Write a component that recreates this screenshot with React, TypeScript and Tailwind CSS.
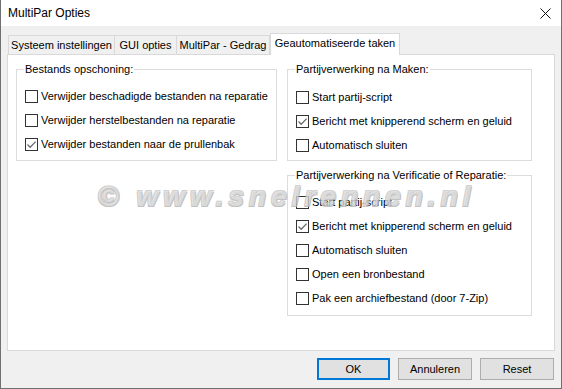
import React from 'react'

/* ─── Checkbox rij ─────────────────────────────────────── */
function Check({ label, checked = false }: { label: string; checked?: boolean }) {
  return (
    <div className="flex h-[24px] items-center">
      <span className="flex h-[13px] w-[13px] flex-shrink-0 items-center justify-center border border-[#333333] bg-white">
        {checked && (
          <svg width="11" height="11" viewBox="0 0 11 11" fill="none">
            <path d="M1.5 5.5 L4.2 8.2 L9.6 2.6" stroke="#6b6b6b" strokeWidth="1.3" />
          </svg>
        )}
      </span>
      <span className="ml-[3px] whitespace-nowrap">{label}</span>
    </div>
  )
}

/* ─── Groepsvak ────────────────────────────────────────── */
function Group({
  title,
  className,
  children,
}: {
  title: string
  className: string
  children: React.ReactNode
}) {
  return (
    <fieldset className={`min-w-0 border border-[#dcdcdc] pl-[8px] ${className}`}>
      <legend className="-ml-[1px] whitespace-nowrap px-[1px] leading-[16px]">{title}</legend>
      {children}
    </fieldset>
  )
}

const tabs = [
  { label: 'Systeem instellingen', w: 'w-[107px]' },
  { label: 'GUI opties', w: 'w-[62px]' },
  { label: 'MultiPar - Gedrag', w: 'w-[93px]' },
]

export default function App() {
  return (
    <div className="flex h-[389px] w-[562px] flex-col overflow-hidden border-x border-b border-[#707070] bg-[#f0f0f0] font-['Liberation_Sans',Arial,sans-serif] text-[11px] text-black">
      {/* Titelbalk */}
      <div className="flex h-[26px] flex-shrink-0 items-center justify-between bg-white pl-[7px] pr-[10px] text-[12px]">
        <span>MultiPar Opties</span>
        <svg width="11" height="11" viewBox="0 0 11 11" fill="none">
          <path d="M0.5 0.5 L10.5 10.5 M10.5 0.5 L0.5 10.5" stroke="#111" strokeWidth="1" />
        </svg>
      </div>

      <div className="flex flex-1 flex-col px-[6px]">
        {/* Tabs */}
        <div className="mt-[7px] flex h-[21px] items-end pl-[1px]">
          {tabs.map((t, i) => (
            <div
              key={t.label}
              className={`flex h-[19px] ${t.w} items-center justify-center whitespace-nowrap border border-b-0 border-[#d9d9d9] bg-[#f0f0f0] pt-[1px] ${i > 0 ? 'border-l-0' : ''}`}
            >
              {t.label}
            </div>
          ))}
          <div className="relative z-10 -mb-px flex h-[22px] w-[130px] items-center justify-center whitespace-nowrap border border-b-0 border-[#d9d9d9] bg-white pb-[2px]">
            Geautomatiseerde taken
          </div>
        </div>

        {/* Paneel */}
        <div className="relative flex h-[297px] gap-[10px] border border-[#d9d9d9] bg-white pl-[8px] pt-[6px]">
          <Group title="Bestands opschoning:" className="h-[100px] w-[261px] flex-shrink-0 pt-[7px]">
            <Check label="Verwijder beschadigde bestanden na reparatie" />
            <Check label="Verwijder herstelbestanden na reparatie" />
            <Check label="Verwijder bestanden naar de prullenbak" checked />
          </Group>

          <div className="flex w-[245px] flex-shrink-0 flex-col gap-[6px]">
            <Group title="Partijverwerking na Maken:" className="h-[100px] pt-[8px]">
              <Check label="Start partij-script" />
              <Check label="Bericht met knipperend scherm en geluid" checked />
              <Check label="Automatisch sluiten" />
            </Group>
            <Group title="Partijverwerking na Verificatie of Reparatie:" className="h-[149px] pt-[7px]">
              <Check label="Start partij-script" />
              <Check label="Bericht met knipperend scherm en geluid" checked />
              <Check label="Automatisch sluiten" />
              <Check label="Open een bronbestand" />
              <Check label="Pak een archiefbestand (door 7-Zip)" />
            </Group>
          </div>

          {/* Watermerk */}
          <span className="pointer-events-none absolute left-[90px] top-[128px] whitespace-nowrap font-['Liberation_Sans',sans-serif] text-[28px] font-bold italic leading-none tracking-[5px] text-white/40 opacity-80 [text-shadow:1px_1px_0_#b4b4b4,-1px_-1px_0_#c8c8c8,1px_-1px_0_#c8c8c8,-1px_1px_0_#b4b4b4]">
            © www.snelrennen.nl
          </span>
        </div>

        {/* Knoppen */}
        <div className="mt-[7px] flex justify-end gap-[8px] pr-[1px]">
          <button className="h-[22px] w-[73px] border-2 border-[#0078d7] bg-[#e1e1e1]">OK</button>
          <button className="h-[22px] w-[74px] border border-[#adadad] bg-[#e1e1e1]">Annuleren</button>
          <button className="h-[22px] w-[74px] border border-[#adadad] bg-[#e1e1e1]">Reset</button>
        </div>
      </div>
    </div>
  )
}
